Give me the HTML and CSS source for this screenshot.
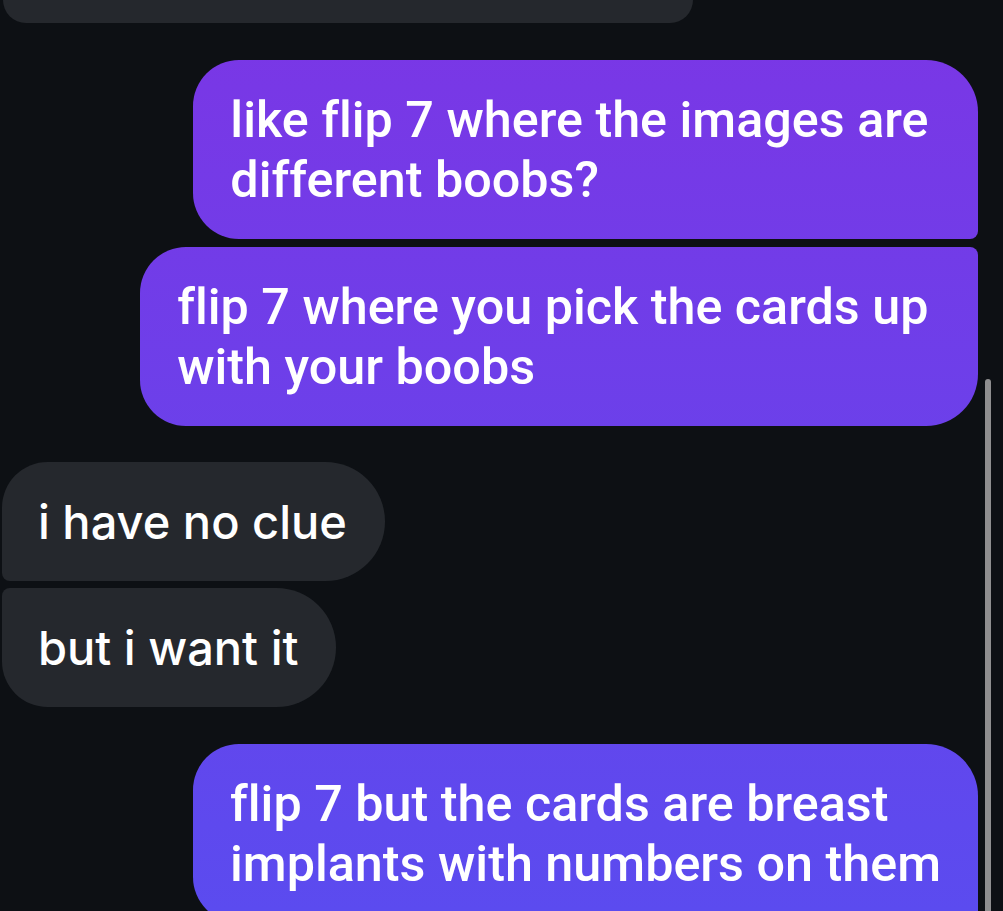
FILE: index.html
```html
<!DOCTYPE html>
<html lang="en">
<head>
<meta charset="utf-8">
<title>Chat</title>
<link rel="stylesheet" href="styles.css">
</head>
<body>
<div class="chat">
  <div class="group them">
    <div class="bubble them-bubble cut"></div>
  </div>
  <div class="group me">
    <div class="bubble me-bubble first">like flip 7 where the images are&nbsp;<br>different boobs?</div>
    <div class="bubble me-bubble last">flip 7 where you pick the cards up&nbsp;<br>with your boobs</div>
  </div>
  <div class="group them">
    <div class="bubble them-bubble first">i have no clue</div>
    <div class="bubble them-bubble last">but i want it</div>
  </div>
  <div class="group me">
    <div class="bubble me-bubble first">flip 7 but the cards are breast&nbsp;<br>implants with numbers on them</div>
  </div>
</div>
<div class="scrollbar"></div>
</body>
</html>
```

FILE: styles.css
```css
html, body {
  margin: 0;
  padding: 0;
  background: #0d1014;
  height: 911px;
  overflow: hidden;
}

.chat {
  display: flex;
  flex-direction: column;
  gap: 37px;
  padding: 0 25px 0 2px;
}

.group {
  display: flex;
  flex-direction: column;
  gap: 8px;
}

.group.me {
  align-items: flex-end;
  gap: 8px;
}

.group.them {
  align-items: flex-start;
  gap: 7px;
}

.group.me + .group.them {
  margin-top: -1px;
}

.bubble {
  color: #ffffff;
  box-sizing: border-box;
  font-variant-ligatures: none;
}

.me-bubble {
  font-family: Roboto, "Liberation Sans", sans-serif;
  font-weight: 500;
  font-size: 50.3px;
  line-height: 60px;
  padding: 30px 37px 29px 37px;
  background: linear-gradient(180deg, #7b36e5 0px, #5b4bef 911px);
  background-attachment: fixed;
  border-radius: 46px 52px 8px 46px;
}

.me-bubble.last {
  border-radius: 46px 8px 52px 46px;
}

.them-bubble {
  font-family: Inter, "Liberation Sans", sans-serif;
  font-weight: 500;
  font-size: 47px;
  line-height: 60px;
  padding: 30px 38px 29px 36px;
  background: #25282d;
  border-radius: 46px 60px 60px 8px;
}

.them-bubble.last {
  border-radius: 8px 60px 60px 46px;
}

.them-bubble.cut {
  height: 23px;
  width: 690px;
  padding: 0;
  border-radius: 0 0 46px 46px;
  margin-left: 1px;
}

.scrollbar {
  position: absolute;
  left: 985px;
  top: 379px;
  width: 6px;
  height: 560px;
  border-radius: 3px;
  background: #8e8e8f;
}
```
